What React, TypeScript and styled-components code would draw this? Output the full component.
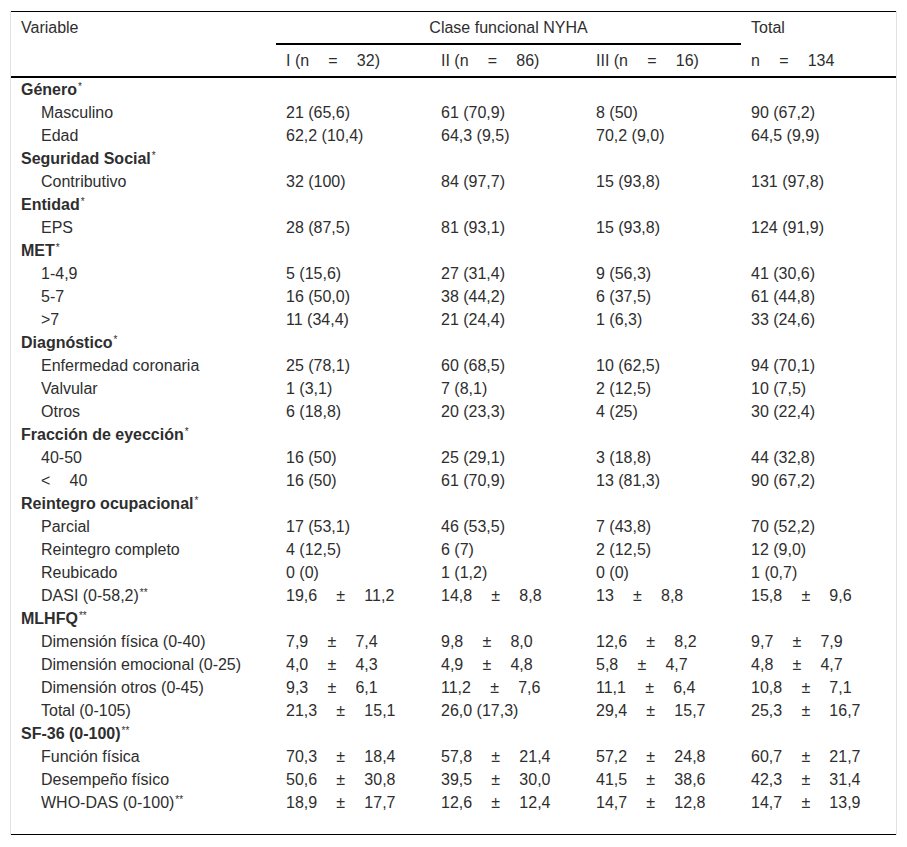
import React from "react";
import styled, { createGlobalStyle } from "styled-components";

const GlobalStyle = createGlobalStyle`
  html, body {
    margin: 0;
    padding: 0;
    background: #ffffff;
  }
  body {
    font-family: "Liberation Sans", Arial, Helvetica, sans-serif;
    color: #2e2e2e;
  }
`;

const Page = styled.div`
  padding: 11px 10px 12px;
`;

const Frame = styled.div`
  border-left: 1px solid #e2e2e2;
  border-right: 1px solid #e2e2e2;
`;

const Table = styled.table`
  width: 100%;
  table-layout: fixed;
  border-collapse: separate;
  border-spacing: 0;
  border-top: 1px solid #000;
  border-bottom: 1px solid #000;
  padding-bottom: 20px;
  font-size: 16px;
  line-height: 19px;
`;

const Col = styled.col<{ $w: number }>`
  width: ${(p) => p.$w}px;
`;

const HeadCell = styled.th<{ $group?: boolean }>`
  text-align: ${(p) => (p.$group ? "center" : "left")};
  font-weight: normal;
  vertical-align: top;
  padding: ${(p) => (p.$group ? "6px 10px 6px" : "6px 10px 8px")};
  border-bottom: ${(p) => (p.$group ? "2px solid #000" : "none")};
  white-space: nowrap;
`;

const SubHeadCell = styled.th`
  text-align: left;
  font-weight: normal;
  vertical-align: middle;
  padding: 6px 10px 6px;
  border-bottom: 2px solid #000;
  white-space: nowrap;
`;

const Cell = styled.td<{ $indent?: boolean }>`
  padding: 2px 10px 2px ${(p) => (p.$indent ? 30 : 10)}px;
  vertical-align: middle;
  white-space: nowrap;
`;

const SectionCell = styled.td`
  padding: 2px 10px;
  font-weight: bold;
  vertical-align: middle;
  white-space: nowrap;
`;

const Sup = styled.sup`
  font-size: 10px;
  font-weight: normal;
  line-height: 0;
  vertical-align: 0.55em;
  margin-left: 1px;
`;

const GAP = "\u2003\u2009";
const EQ = `${GAP}=${GAP}`;
const pm = (a: string, b: string) => `${a}${GAP}\u00b1${GAP}${b}`;

type Row =
  | { kind: "section"; label: string; sup: string }
  | { kind: "data"; label: string; sup?: string; values: string[] };

const S = (label: string, sup = "*"): Row => ({ kind: "section", label, sup });
const D = (label: string, values: string[], sup?: string): Row => ({
  kind: "data",
  label,
  values,
  sup,
});

const rows: Row[] = [
  S("Género"),
  D("Masculino", ["21 (65,6)", "61 (70,9)", "8 (50)", "90 (67,2)"]),
  D("Edad", ["62,2 (10,4)", "64,3 (9,5)", "70,2 (9,0)", "64,5 (9,9)"]),
  S("Seguridad Social"),
  D("Contributivo", ["32 (100)", "84 (97,7)", "15 (93,8)", "131 (97,8)"]),
  S("Entidad"),
  D("EPS", ["28 (87,5)", "81 (93,1)", "15 (93,8)", "124 (91,9)"]),
  S("MET"),
  D("1-4,9", ["5 (15,6)", "27 (31,4)", "9 (56,3)", "41 (30,6)"]),
  D("5-7", ["16 (50,0)", "38 (44,2)", "6 (37,5)", "61 (44,8)"]),
  D(">7", ["11 (34,4)", "21 (24,4)", "1 (6,3)", "33 (24,6)"]),
  S("Diagnóstico"),
  D("Enfermedad coronaria", ["25 (78,1)", "60 (68,5)", "10 (62,5)", "94 (70,1)"]),
  D("Valvular", ["1 (3,1)", "7 (8,1)", "2 (12,5)", "10 (7,5)"]),
  D("Otros", ["6 (18,8)", "20 (23,3)", "4 (25)", "30 (22,4)"]),
  S("Fracción de eyección"),
  D("40-50", ["16 (50)", "25 (29,1)", "3 (18,8)", "44 (32,8)"]),
  D(`<${GAP}40`, ["16 (50)", "61 (70,9)", "13 (81,3)", "90 (67,2)"]),
  S("Reintegro ocupacional"),
  D("Parcial", ["17 (53,1)", "46 (53,5)", "7 (43,8)", "70 (52,2)"]),
  D("Reintegro completo", ["4 (12,5)", "6 (7)", "2 (12,5)", "12 (9,0)"]),
  D("Reubicado", ["0 (0)", "1 (1,2)", "0 (0)", "1 (0,7)"]),
  D(
    "DASI (0-58,2)",
    [pm("19,6", "11,2"), pm("14,8", "8,8"), pm("13", "8,8"), pm("15,8", "9,6")],
    "**"
  ),
  S("MLHFQ", "**"),
  D("Dimensión física (0-40)", [pm("7,9", "7,4"), pm("9,8", "8,0"), pm("12,6", "8,2"), pm("9,7", "7,9")]),
  D("Dimensión emocional (0-25)", [pm("4,0", "4,3"), pm("4,9", "4,8"), pm("5,8", "4,7"), pm("4,8", "4,7")]),
  D("Dimensión otros (0-45)", [pm("9,3", "6,1"), pm("11,2", "7,6"), pm("11,1", "6,4"), pm("10,8", "7,1")]),
  D("Total (0-105)", [pm("21,3", "15,1"), "26,0 (17,3)", pm("29,4", "15,7"), pm("25,3", "16,7")]),
  S("SF-36 (0-100)", "**"),
  D("Función física", [pm("70,3", "18,4"), pm("57,8", "21,4"), pm("57,2", "24,8"), pm("60,7", "21,7")]),
  D("Desempeño físico", [pm("50,6", "30,8"), pm("39,5", "30,0"), pm("41,5", "38,6"), pm("42,3", "31,4")]),
  D(
    "WHO-DAS (0-100)",
    [pm("18,9", "17,7"), pm("12,6", "12,4"), pm("14,7", "12,8"), pm("14,7", "13,9")],
    "**"
  ),
];

export default function App() {
  return (
    <>
      <GlobalStyle />
      <Page>
        <Frame>
          <Table>
            <colgroup>
              <Col $w={265} />
              <Col $w={155} />
              <Col $w={155} />
              <Col $w={155} />
              <Col $w={155} />
            </colgroup>
            <thead>
              <tr>
                <HeadCell>Variable</HeadCell>
                <HeadCell $group colSpan={3}>
                  Clase funcional NYHA
                </HeadCell>
                <HeadCell>Total</HeadCell>
              </tr>
              <tr>
                <SubHeadCell />
                <SubHeadCell>{`I (n${EQ}32)`}</SubHeadCell>
                <SubHeadCell>{`II (n${EQ}86)`}</SubHeadCell>
                <SubHeadCell>{`III (n${EQ}16)`}</SubHeadCell>
                <SubHeadCell>{`n${EQ}134`}</SubHeadCell>
              </tr>
            </thead>
            <tbody>
              {rows.map((r, i) =>
                r.kind === "section" ? (
                  <tr key={i}>
                    <SectionCell colSpan={5}>
                      {r.label}
                      <Sup>{r.sup}</Sup>
                    </SectionCell>
                  </tr>
                ) : (
                  <tr key={i}>
                    <Cell $indent>
                      {r.label}
                      {r.sup && <Sup>{r.sup}</Sup>}
                    </Cell>
                    {r.values.map((v, j) => (
                      <Cell key={j}>{v}</Cell>
                    ))}
                  </tr>
                )
              )}
            </tbody>
          </Table>
        </Frame>
      </Page>
    </>
  );
}
